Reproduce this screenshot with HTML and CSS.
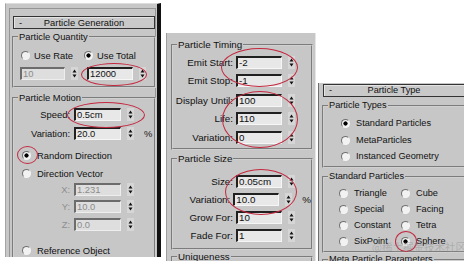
FILE: index.html
```html
<!DOCTYPE html>
<html>
<head>
<meta charset="utf-8">
<link rel="stylesheet" href="styles.css">
</head>
<body>
<div class="stage">
  <section class="panel p-left">
    <div class="roll">
      <div class="rhead"><span class="minus">-</span><span class="rtitle">Particle Generation</span></div>
      <fieldset class="grp g-qty">
        <legend>Particle Quantity</legend>
        <div class="radios">
          <div class="opt w63"><span class="rb"></span>Use Rate</div>
          <div class="opt"><span class="rb on"></span>Use Total</div>
        </div>
        <div class="qrow">
          <span class="inp dis w45">10</span>
          <svg class="spin" viewBox="0 0 7 13"><path d="M1.5 5.5L3.5 2.5L5.5 5.5z M1.5 7.5L3.5 10.5L5.5 7.5z"/></svg>
          <span class="inp w46 ml9">12000</span>
          <svg class="spin" viewBox="0 0 7 13"><path d="M1.5 5.5L3.5 2.5L5.5 5.5z M1.5 7.5L3.5 10.5L5.5 7.5z"/></svg>
        </div>
      </fieldset>
      <fieldset class="grp g-motion">
        <legend>Particle Motion</legend>
        <div class="row mt5"><span class="lbl">Speed:</span><span class="inp w47">0.5cm</span>
          <svg class="spin" viewBox="0 0 7 13"><path d="M1.5 5.5L3.5 2.5L5.5 5.5z M1.5 7.5L3.5 10.5L5.5 7.5z"/></svg></div>
        <div class="row mt6"><span class="lbl">Variation:</span><span class="inp w47">20.0</span>
          <svg class="spin" viewBox="0 0 7 13"><path d="M1.5 5.5L3.5 2.5L5.5 5.5z M1.5 7.5L3.5 10.5L5.5 7.5z"/></svg><span class="unit">%</span></div>
        <div class="opt line mt9 pl8"><span class="rb on"></span>Random Direction</div>
        <div class="opt line mt6 pl8"><span class="rb"></span>Direction Vector</div>
        <div class="row mt4"><span class="lbl dim">X:</span><span class="inp dis w47">1.231</span>
          <svg class="spin" viewBox="0 0 7 13"><path d="M1.5 5.5L3.5 2.5L5.5 5.5z M1.5 7.5L3.5 10.5L5.5 7.5z"/></svg></div>
        <div class="row mt4"><span class="lbl dim">Y:</span><span class="inp dis w47">10.0</span>
          <svg class="spin" viewBox="0 0 7 13"><path d="M1.5 5.5L3.5 2.5L5.5 5.5z M1.5 7.5L3.5 10.5L5.5 7.5z"/></svg></div>
        <div class="row mt5"><span class="lbl dim">Z:</span><span class="inp dis w47">0.0</span>
          <svg class="spin" viewBox="0 0 7 13"><path d="M1.5 5.5L3.5 2.5L5.5 5.5z M1.5 7.5L3.5 10.5L5.5 7.5z"/></svg></div>
        <div class="opt line mt13 pl8"><span class="rb"></span>Reference Object</div>
      </fieldset>
    </div>
  </section>

  <section class="panel p-mid">
    <fieldset class="grp g-timing">
      <legend>Particle Timing</legend>
      <div class="row mt6"><span class="lbl">Emit Start:</span><span class="inp w46">-2</span>
        <svg class="spin" viewBox="0 0 7 13"><path d="M1.5 5.5L3.5 2.5L5.5 5.5z M1.5 7.5L3.5 10.5L5.5 7.5z"/></svg></div>
      <div class="row mt5"><span class="lbl">Emit Stop:</span><span class="inp w46">-1</span>
        <svg class="spin" viewBox="0 0 7 13"><path d="M1.5 5.5L3.5 2.5L5.5 5.5z M1.5 7.5L3.5 10.5L5.5 7.5z"/></svg></div>
      <div class="row mt7"><span class="lbl">Display Until:</span><span class="inp w46">100</span>
        <svg class="spin" viewBox="0 0 7 13"><path d="M1.5 5.5L3.5 2.5L5.5 5.5z M1.5 7.5L3.5 10.5L5.5 7.5z"/></svg></div>
      <div class="row mt5"><span class="lbl">Life:</span><span class="inp w46">110</span>
        <svg class="spin" viewBox="0 0 7 13"><path d="M1.5 5.5L3.5 2.5L5.5 5.5z M1.5 7.5L3.5 10.5L5.5 7.5z"/></svg></div>
      <div class="row mt6"><span class="lbl">Variation:</span><span class="inp w46">0</span>
        <svg class="spin" viewBox="0 0 7 13"><path d="M1.5 5.5L3.5 2.5L5.5 5.5z M1.5 7.5L3.5 10.5L5.5 7.5z"/></svg></div>
    </fieldset>
    <fieldset class="grp g-size">
      <legend>Particle Size</legend>
      <div class="row mt11"><span class="lbl">Size:</span><span class="inp w46">0.05cm</span>
        <svg class="spin" viewBox="0 0 7 13"><path d="M1.5 5.5L3.5 2.5L5.5 5.5z M1.5 7.5L3.5 10.5L5.5 7.5z"/></svg></div>
      <div class="row mt5"><span class="lbl">Variation:</span><span class="inp w46">10.0</span>
        <svg class="spin" viewBox="0 0 7 13"><path d="M1.5 5.5L3.5 2.5L5.5 5.5z M1.5 7.5L3.5 10.5L5.5 7.5z"/></svg><span class="unit">%</span></div>
      <div class="row mt5"><span class="lbl">Grow For:</span><span class="inp w46">10</span>
        <svg class="spin" viewBox="0 0 7 13"><path d="M1.5 5.5L3.5 2.5L5.5 5.5z M1.5 7.5L3.5 10.5L5.5 7.5z"/></svg></div>
      <div class="row mt5"><span class="lbl">Fade For:</span><span class="inp w46">1</span>
        <svg class="spin" viewBox="0 0 7 13"><path d="M1.5 5.5L3.5 2.5L5.5 5.5z M1.5 7.5L3.5 10.5L5.5 7.5z"/></svg></div>
    </fieldset>
    <fieldset class="grp g-uniq">
      <legend>Uniqueness</legend>
    </fieldset>
  </section>

  <section class="panel p-right">
    <div class="rhead rh-right"><span class="minus">-</span><span class="rtitle">Particle Type</span></div>
    <fieldset class="grp g-types">
      <legend>Particle Types</legend>
      <div class="opt line mt6 pl17"><span class="rb on"></span>Standard Particles</div>
      <div class="opt line mt5 pl17"><span class="rb"></span>MetaParticles</div>
      <div class="opt line mt4 pl17"><span class="rb"></span>Instanced Geometry</div>
    </fieldset>
    <fieldset class="grp g-std">
      <legend>Standard Particles</legend>
      <div class="pair mt5"><div class="opt w62"><span class="rb"></span>Triangle</div><div class="opt"><span class="rb"></span>Cube</div></div>
      <div class="pair mt4"><div class="opt w62"><span class="rb"></span>Special</div><div class="opt"><span class="rb"></span>Facing</div></div>
      <div class="pair mt4"><div class="opt w62"><span class="rb"></span>Constant</div><div class="opt"><span class="rb"></span>Tetra</div></div>
      <div class="pair mt4"><div class="opt w62"><span class="rb"></span>SixPoint</div><div class="opt"><span class="rb on"></span>Sphere</div></div>
    </fieldset>
    <fieldset class="grp g-meta">
      <legend>Meta Particle Parameters</legend>
    </fieldset>
  </section>

  <div class="mark m1"></div>
  <div class="mark m2"></div>
  <div class="mark m3"></div>
  <div class="mark m4"></div>
  <div class="mark m5"></div>
  <div class="mark m6"></div>
  <div class="mark m7"></div>
  <div class="wm">@稀土掘金技术社区</div>
</div>
</body>
</html>
```

FILE: styles.css
```css
* { box-sizing: border-box; }
html, body { margin: 0; padding: 0; background: #fff; }
body { width: 464px; height: 261px; overflow: hidden; }
.stage {
  position: relative;
  display: flex;
  align-items: flex-start;
  width: 464px;
  height: 261px;
  overflow: hidden;
}
.panel {
  background: #c7c7c7;
  color: #111;
  font-family: "Liberation Sans", Arial, sans-serif;
  font-size: 9.4px;
  line-height: 11px;
  overflow: hidden;
  flex: none;
}

/* left panel */
.p-left {
  width: 156px;
  height: 254px;
  margin: 3px 0 0 5px;
  border-left: 1px solid #a4a4a4;
  border-top: 1px solid #dedede;
  border-right: 4px solid #111;
  padding: 4px 1px 0 3px;
}
.roll {
  height: 260px;
  border: 1px solid #959595;
  border-bottom: none;
  padding: 7px 0 0 3px;
}

/* middle panel */
.p-mid {
  width: 150px;
  height: 228px;
  margin: 33px 0 0 5px;
  border-left: 1px solid #9e9e9e;
  border-right: 1px solid #e6e6e6;
  padding: 6px 2px 0 4px;
  font-size: 9.8px;
}

/* right panel */
.p-right {
  width: 150px;
  height: 178px;
  margin: 83px 0 0 2px;
  border-left: 1px solid #6e6e6e;
  padding: 1px 0 0 3px;
  font-size: 9.2px;
}

/* rollout header */
.rhead {
  display: flex;
  align-items: center;
  height: 13px;
  border: 1px solid #333;
  background: #c9c9c9;
  box-shadow: inset 1px 1px 0 #e4e4e4;
}
.minus { width: 14px; padding-left: 5px; }
.rtitle { flex: 1; text-align: center; margin-right: 14px; }
.rh-right { margin-left: 1px; width: 150px; }
.rh-right .rtitle { margin-right: 22px; }

/* groups */
.grp {
  margin: 0 -1px;
  padding: 0;
  min-width: 0;
  border: 2px groove #d0d0d0;
}
.grp legend {
  margin-left: 4px;
  padding: 0 1px;
  line-height: 11px;
}
.g-qty { margin-top: 2px; padding-bottom: 6px; }
.g-motion { margin-top: 4px; padding-bottom: 6px; }
.p-mid .grp, .p-right .grp { margin: 0; }
.g-timing { padding-bottom: 4px; }
.g-size { margin-top: 3px !important; padding-bottom: 6px; }
.g-uniq { margin-top: 1px !important; height: 20px; }
.g-types { margin-top: 3px !important; padding-bottom: 4px; }
.g-std { margin-top: 3px !important; padding-bottom: 4px; }
.g-meta { margin-top: 1px !important; height: 20px; }

/* rows */
.radios { display: flex; margin-top: 7px; height: 12px; padding-left: 7px; }
.opt { display: flex; align-items: center; height: 12px; white-space: nowrap; }
.opt .rb { margin-right: 4px; }
.line .rb { margin-right: 6px; }
.w63 { width: 63px; }
.w62 { width: 62px; }
.pl8 { padding-left: 8px; }
.pl17 { padding-left: 17px; }
.pair { display: flex; padding-left: 15px; height: 12px; }
.pair .rb { margin-right: 6px; }

.qrow { display: flex; align-items: center; margin-top: 6px; height: 13px; padding-left: 6px; }
.row { display: flex; align-items: center; height: 13px; }
.lbl { width: 60px; text-align: right; padding-right: 4px; white-space: nowrap; }
.p-mid .lbl { width: 63px; padding-right: 3px; }
.dim { color: #8e8e8e; }
.unit { margin-left: 10px; }

.mt4 { margin-top: 4px; }
.mt5 { margin-top: 5px; }
.mt6 { margin-top: 6px; }
.mt7 { margin-top: 7px; }
.mt9 { margin-top: 9px; }
.mt11 { margin-top: 11px; }
.mt13 { margin-top: 13px; }

/* spinner field */
.inp {
  display: block;
  flex: none;
  height: 13px;
  background: #e8e8e8;
  border-style: solid;
  border-width: 2px 1px 1px 2px;
  border-color: #202020 #f6f6f6 #f6f6f6 #202020;
  padding-left: 1px;
  line-height: 10px;
  white-space: nowrap;
}
.dis { color: #8c8c8c; border-color: #6c6c6c #eeeeee #eeeeee #6c6c6c; background: #dedede; }
.w45 { width: 45px; }
.w46 { width: 46px; }
.w47 { width: 47px; }
.ml9 { margin-left: 9px; }
.spin {
  display: block;
  flex: none;
  width: 7px;
  height: 13px;
  margin-left: 6px;
  background: #d6d6d6;
  fill: #111;
}

/* radio button */
.rb {
  display: inline-block;
  flex: none;
  width: 9px;
  height: 9px;
  border-radius: 50%;
  border: 1px solid;
  border-color: #707070 #f4f4f4 #f4f4f4 #707070;
  background: #f2f2f2;
}
.rb.on { background: radial-gradient(circle, #000 0 1.8px, #f2f2f2 2.4px); }

/* red annotation ellipses */
.mark {
  position: absolute;
  border: 1.2px solid #c4283f;
  border-radius: 50%;
}
.m1 { left: 81px; top: 63px; width: 66px; height: 23px; }
.m2 { left: 67px; top: 102px; width: 78px; height: 26px; }
.m3 { left: 17px; top: 146px; width: 21px; height: 18px; }
.m4 { left: 221px; top: 48px; width: 77px; height: 39px; }
.m5 { left: 222px; top: 91px; width: 76px; height: 57px; }
.m6 { left: 225px; top: 169px; width: 72px; height: 46px; }
.m7 { left: 395px; top: 231px; width: 22px; height: 21px; }

.wm {
  position: absolute;
  left: 372px;
  top: 240px;
  font-family: "Noto Sans CJK SC", sans-serif;
  font-size: 10.5px;
  line-height: 13px;
  color: rgba(140, 140, 140, 0.45);
  white-space: nowrap;
}
```
